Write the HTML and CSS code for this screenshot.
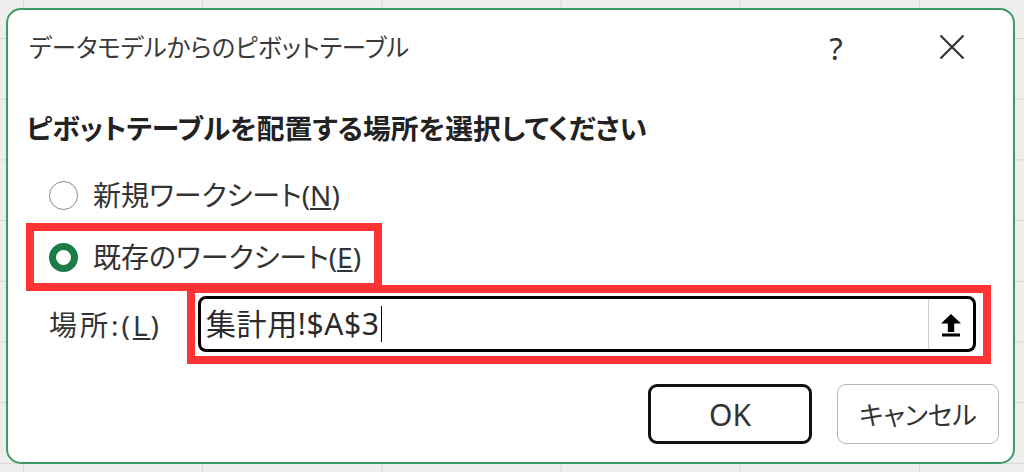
FILE: index.html
```html
<!DOCTYPE html>
<html lang="ja">
<head>
<meta charset="utf-8">
<link rel="stylesheet" href="styles.css">
</head>
<body>
<div class="dialog">
  <div class="titlebar">
    <div class="title">データモデルからのピボットテーブル</div>
    <div class="help">?</div>
    <div class="close">
      <svg width="26" height="26" viewBox="0 0 26 26"><path d="M1.5 1.5 L24.5 24.5 M24.5 1.5 L1.5 24.5" stroke="#333" stroke-width="2.2" fill="none"/></svg>
    </div>
  </div>
  <div class="heading">ピボットテーブルを配置する場所を選択してください</div>
  <div class="radio-row first">
    <span class="radio"></span>
    <span class="label">新規ワークシート(<u>N</u>)</span>
  </div>
  <div class="mark mark-radio">
    <div class="radio-row">
      <span class="radio checked"></span>
      <span class="label">既存のワークシート(<u>E</u>)</span>
    </div>
  </div>
  <div class="loc-row">
    <span class="label loc-label">場所:(<u>L</u>)</span>
    <div class="mark mark-input">
      <div class="input">
        <span class="value">集計用!$A$3</span><span class="caret"></span>
        <span class="collapse">
          <svg width="20" height="23" viewBox="0 0 20 23"><path d="M10 0 L20 9.5 L13.2 9.5 L13.2 18 L6.8 18 L6.8 9.5 L0 9.5 Z" fill="#000"/><rect x="1" y="19.5" width="18" height="3" fill="#000"/></svg>
        </span>
      </div>
    </div>
  </div>
  <div class="buttons">
    <div class="btn ok">OK</div>
    <div class="btn cancel">キャンセル</div>
  </div>
</div>
</body>
</html>
```

FILE: styles.css
```css
html, body {
  margin: 0;
  padding: 0;
}
body {
  width: 1024px;
  height: 472px;
  box-sizing: border-box;
  padding: 8px 9px 0 6px;
  background-color: #eeeeee;
  background-image:
    linear-gradient(to right, #d6d6d6 1px, transparent 1px),
    linear-gradient(to bottom, #d6d6d6 1px, transparent 1px);
  background-size: 179.2px 60.7px;
  background-position: 23px 38px;
  font-family: "Noto Sans", "Noto Sans CJK JP", sans-serif;
  font-feature-settings: "palt";
  color: #333;
  overflow: hidden;
}
.dialog {
  width: 1009px;
  height: 456px;
  box-sizing: border-box;
  border: 2px solid #3f9b66;
  border-radius: 15px;
  background: #fff;
  display: flex;
  flex-direction: column;
}
.titlebar {
  height: 74px;
  flex: none;
  display: flex;
  align-items: center;
  padding-left: 21px;
}
.title {
  flex: 1;
  font-size: 24.5px;
  color: #3a3a3a;
  line-height: 1;
  padding-top: 2px;
}
.help {
  width: 14px;
  text-align: center;
  font-size: 31px;
  line-height: 1;
  color: #333;
  font-family: "Noto Sans", sans-serif;
  margin-right: 96px;
  padding-top: 2px;
}
.close {
  width: 26px;
  height: 26px;
  margin-right: 48px;
  display: flex;
}
.heading {
  margin-top: 26px;
  padding-left: 18px;
  font-size: 27.8px;
  font-weight: bold;
  line-height: 36px;
  color: #222;
  white-space: nowrap;
}
.radio-row {
  display: flex;
  align-items: center;
  height: 52px;
}
.radio-row.first {
  margin-top: 31px;
  height: 36px;
  padding-left: 41px;
}
.radio {
  width: 29px;
  height: 29px;
  box-sizing: border-box;
  border: 1.5px solid #8a8a8a;
  border-radius: 50%;
  flex: none;
  margin-right: 15px;
}
.radio.checked {
  border: 7px solid #1b7d45;
}
.label {
  font-size: 28px;
  line-height: 36px;
  color: #333;
  white-space: nowrap;
}
.mark {
  border: 8px solid #ff3333;
}
.mark-radio {
  margin-top: 10px;
  margin-left: 18px;
  width: 356px;
  box-sizing: border-box;
  padding-left: 15px;
}
.loc-row {
  display: flex;
  align-items: center;
  margin-top: -6px;
  padding-left: 41px;
}
.loc-label {
  width: 138px;
  letter-spacing: 3px;
}
.mark-input {
  width: 804px;
  height: 79px;
  box-sizing: border-box;
  padding: 3px 7px 4px 3px;
}
.input {
  height: 56px;
  box-sizing: border-box;
  border: 3px solid #000;
  border-radius: 8px;
  display: flex;
  align-items: center;
  padding-left: 5px;
}
.value {
  font-size: 30px;
  letter-spacing: 0.6px;
  color: #2a2a2a;
  line-height: 1;
  white-space: nowrap;
}
.caret {
  width: 1.5px;
  height: 36px;
  background: #000;
  margin-left: 1px;
}
.collapse {
  margin-left: auto;
  width: 45px;
  align-self: stretch;
  border-left: 1px solid #d0d0d0;
  display: flex;
  align-items: center;
  justify-content: center;
  padding-top: 2px;
  box-sizing: border-box;
}
.buttons {
  display: flex;
  justify-content: flex-end;
  gap: 25px;
  margin-top: 20px;
  padding-right: 14px;
}
.btn {
  height: 60px;
  box-sizing: border-box;
  display: flex;
  align-items: center;
  justify-content: center;
  border-radius: 9px;
  color: #333;
}
.ok {
  width: 164px;
  border: 3px solid #111;
  font-size: 30px;
}
.cancel {
  width: 162px;
  border: 1.5px solid #b5b5b5;
  font-size: 26px;
}
```
